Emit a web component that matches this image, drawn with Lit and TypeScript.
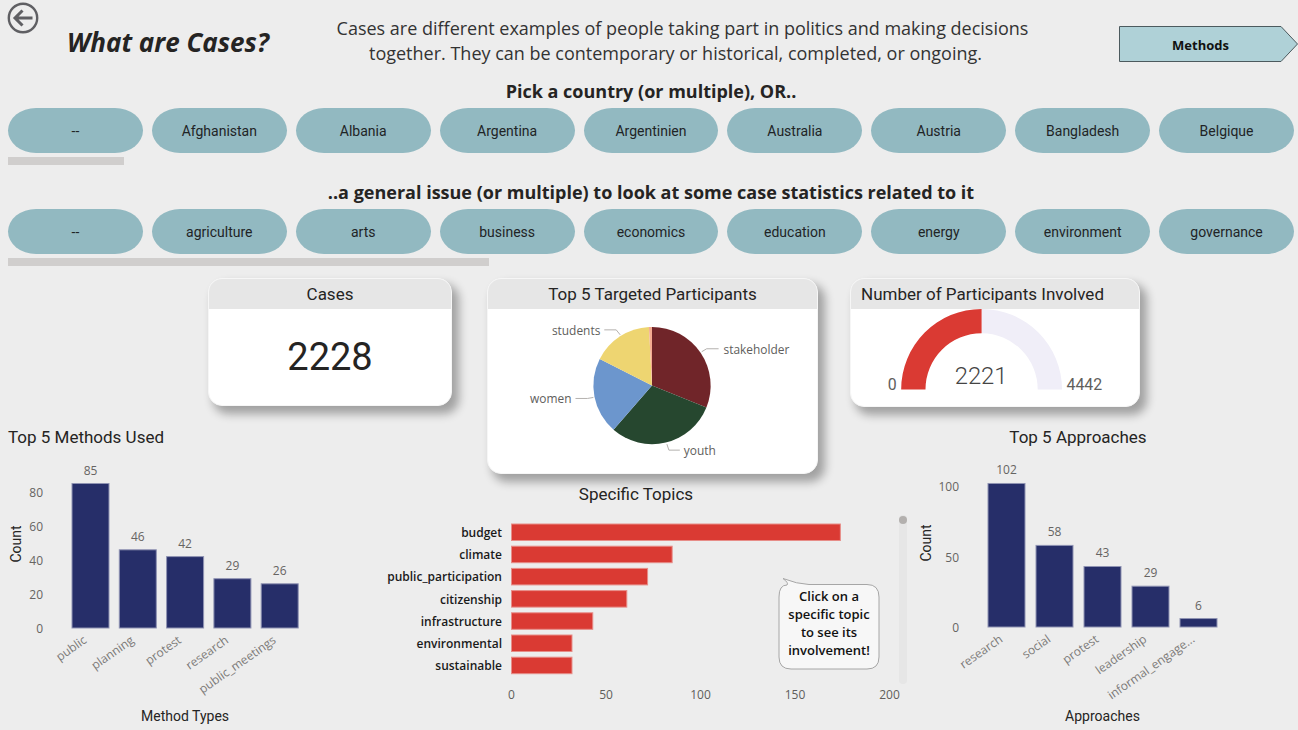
import { LitElement, html, svg, css } from "lit";
import { customElement, property, state } from "lit/decorators.js";
import { classMap } from "lit/directives/class-map.js";

interface Datum {
  label: string;
  value: number;
}

const COUNTRIES = ["--", "Afghanistan", "Albania", "Argentina", "Argentinien", "Australia", "Austria", "Bangladesh", "Belgique"];
const ISSUES = ["--", "agriculture", "arts", "business", "economics", "education", "energy", "environment", "governance"];

const METHODS: Datum[] = [
  { label: "public", value: 85 },
  { label: "planning", value: 46 },
  { label: "protest", value: 42 },
  { label: "research", value: 29 },
  { label: "public_meetings", value: 26 },
];

const APPROACHES: Datum[] = [
  { label: "research", value: 102 },
  { label: "social", value: 58 },
  { label: "protest", value: 43 },
  { label: "leadership", value: 29 },
  { label: "informal_engage...", value: 6 },
];

const TOPICS: Datum[] = [
  { label: "budget", value: 174 },
  { label: "climate", value: 85 },
  { label: "public_participation", value: 72 },
  { label: "citizenship", value: 61 },
  { label: "infrastructure", value: 43 },
  { label: "environmental", value: 32 },
  { label: "sustainable", value: 32 },
];

/** Horizontal slicer: a heading, a row of pills and a scroll track. */
@customElement("pill-slicer")
class PillSlicer extends LitElement {
  static styles = css`
    :host { display: block; }
    .heading {
      margin: 0 0 5px;
      padding-left: 4px;
      text-align: center;
      font: 700 18px/24px "Open Sans", "Noto Sans", sans-serif;
      color: #252423;
    }
    .pills {
      display: grid;
      grid-auto-flow: column;
      grid-auto-columns: minmax(0, 1fr);
      gap: 9px;
      padding: 0 4px 0 8px;
    }
    .pill {
      height: 45px;
      border: 0;
      padding: 0;
      border-radius: 28px / 50%;
      background: #92b9c1;
      color: #1f2426;
      font: 400 14px/20px Roboto, sans-serif;
      cursor: pointer;
    }
    .pill.on { background: #6f9fa9; }
    .track { padding: 4px 4px 0 8px; }
    .thumb { height: 8px; background: #d0cecd; }
  `;
  @property() heading = "";
  @property({ attribute: false }) items: string[] = [];
  @property({ type: Number }) visible = 100;
  @state() private picked = new Set<string>();

  private toggle(item: string) {
    const next = new Set(this.picked);
    next.has(item) ? next.delete(item) : next.add(item);
    this.picked = next;
  }

  render() {
    return html`
      <h2 class="heading">${this.heading}</h2>
      <div class="pills">
        ${this.items.map(
          (item) => html`<button
            type="button"
            class=${classMap({ pill: true, on: this.picked.has(item) })}
            aria-pressed=${this.picked.has(item) ? "true" : "false"}
            @click=${() => this.toggle(item)}
          >${item}</button>`
        )}
      </div>
      <div class="track"><div class="thumb" style="width:${this.visible}%"></div></div>
    `;
  }
}

/** Vertical bars with value labels and slanted category names. */
@customElement("column-chart")
class ColumnChart extends LitElement {
  static styles = css`
    :host { display: block; }
    .plot { display: block; width: 100%; }
    .bar { fill: #262e69; stroke: #8f93b3; stroke-width: 1; }
    .small { font: 400 12px "Open Sans", "Noto Sans", sans-serif; fill: #666462; }
    .name { font: 400 12px "Open Sans", "Noto Sans", sans-serif; fill: #7c7a78; }
    .axis { font: 400 14px Roboto, sans-serif; fill: #252423; }
    .mid { text-anchor: middle; }
    .end { text-anchor: end; }
  `;
  @property({ attribute: false }) data: Datum[] = [];
  @property({ attribute: false }) ticks: number[] = [];
  @property({ type: Number }) width = 377;
  @property({ type: Number }) start = 72;
  @property({ type: Number }) base = 181;
  @property({ type: Number }) unit = 1.7;
  @property({ type: Number }) step = 47.3;
  @property({ type: Number }) tickx = 43;
  @property() caption = "";

  render() {
    const { start, base, unit, step } = this;
    const w = 37;
    const centre = start + step * 2 + w / 2;
    return html`<svg class="plot" viewBox="0 0 ${this.width} 283" role="img" aria-label=${this.caption}>
      <text class="axis mid" transform="translate(21 ${base - 84}) rotate(-90)">Count</text>
      ${this.ticks.map((t) => svg`<text class="small end" x=${this.tickx} y=${base - t * unit + 5}>${t}</text>`)}
      ${this.data.map((d, i) => {
        const x = start + i * step;
        const h = d.value * unit;
        const cx = x + w / 2;
        return svg`
          <rect class="bar" x=${x} y=${base - h} width=${w} height=${h}></rect>
          <text class="small mid" x=${cx} y=${base - h - 9}>${d.value}</text>
          <text class="name end" transform="translate(${cx - 3} ${base + 14}) rotate(-35)">${d.label}</text>`;
      })}
      <text class="axis mid" x=${centre} y="274">${this.caption}</text>
    </svg>`;
  }
}

@customElement("app-root")
class AppRoot extends LitElement {
  static styles = css`
    :host {
      display: block;
      box-sizing: border-box;
      min-height: 100vh;
      background: #ededed;
      color: #252423;
      font-family: "Open Sans", "Noto Sans", sans-serif;
    }
    .header {
      display: grid;
      grid-template-columns: 294fr 757fr 68fr 179fr;
      height: 79px;
    }
    .lead { display: flex; align-items: flex-start; gap: 28px; padding: 2px 0 0 7px; }
    .back { flex: none; width: 32px; height: 32px; padding: 0; border: 0; background: none; cursor: pointer; }
    .back svg { display: block; }
    .title { margin: 22px 0 0; font: italic 700 26px/36px "Open Sans", "Noto Sans", sans-serif; white-space: nowrap; }
    .intro { margin: 16px 0 0; padding-left: 20px; text-align: center; font-size: 18px; line-height: 25px; color: #333; }
    .methods {
      grid-column: 4;
      display: grid;
      align-items: center;
      margin-top: 25px;
      height: 38px;
      padding: 0;
      border: 0;
      background: none;
      font: 700 13px/20px "Open Sans", "Noto Sans", sans-serif;
      color: #111;
      cursor: pointer;
    }
    .methods > * { grid-area: 1 / 1; }
    .methods svg { display: block; width: 100%; }
    .methods .word { padding: 2px 16px 0 0; }

    .slicers { display: grid; gap: 15px; }

    .board {
      display: grid;
      margin-top: 12px;
      grid-template-columns: 208fr 169fr 75fr 35fr 331fr 32fr 60fr 230fr 158fr;
      grid-template-rows: 149px 57px auto;
      align-items: start;
    }
    .cases { grid-area: 1 / 2 / 2 / 4; }
    .targets { grid-area: 1 / 5 / 3 / 6; }
    .gauge { grid-area: 1 / 7 / 2 / 9; }
    .used { grid-area: 2 / 1 / 4 / 3; }
    .topics { grid-area: 3 / 3 / 4 / 8; position: relative; }
    .approaches { grid-area: 2 / 8 / 4 / 10; }

    .card {
      box-sizing: border-box;
      border: 1px solid #f6f6f6;
      border-radius: 14px;
      background: #fff;
      overflow: hidden;
      box-shadow: 6px 7px 10px 1px rgba(0, 0, 0, 0.32);
    }
    .card-title, .chart-title { margin: 0; font: 400 17px/20px Roboto, sans-serif; text-align: center; }
    .card-title { padding: 5px 0; background: #e6e6e6; }
    .gauge .card-title { padding-left: 10px; text-align: left; }
    .used .chart-title { padding-left: 8px; text-align: left; }
    .approaches .chart-title { padding-right: 52px; }
    .topics .chart-title { padding-right: 15px; }
    .total { margin: 0; font: 400 38px/96px Roboto, sans-serif; text-align: center; }
    .plot { display: block; width: 100%; }
    .pie-label { font: 400 12px "Open Sans", "Noto Sans", sans-serif; fill: #605e5c; }
    .lead-line { fill: none; stroke: #b3b0ad; stroke-width: 1; }
    .limit { font: 400 16px Roboto, sans-serif; fill: #605e5c; }
    .reading { font: 300 24px Roboto, sans-serif; fill: #444; }
    .tick { font: 400 12px "Open Sans", "Noto Sans", sans-serif; fill: #605e5c; }
    .topic { font: 600 12px "Open Sans", "Noto Sans", sans-serif; fill: #1a1a1a; }
    .topic-bar { fill: #da3a33; stroke: #e78d88; stroke-width: 1; }
    .mid { text-anchor: middle; }
    .end { text-anchor: end; }
    .callout {
      position: absolute;
      right: 29px;
      top: 93px;
      width: 104px;
      height: 94px;
    }
    .callout svg { position: absolute; inset: 0; }
    .callout-text {
      position: relative;
      margin: 0;
      padding-top: 10px;
      text-align: center;
      font: 600 13px/18px "Open Sans", "Noto Sans", sans-serif;
      color: #111;
    }
  `;

  private slice(from: number, to: number, fill: string) {
    const p = (deg: number) => {
      const a = (deg * Math.PI) / 180;
      return `${165 + 59 * Math.sin(a)} ${77 - 59 * Math.cos(a)}`;
    };
    return svg`<path fill=${fill} d="M165 77 L${p(from)} A59 59 0 0 1 ${p(to)} Z"></path>`;
  }

  private pie() {
    return html`<svg class="plot" viewBox="0 0 331 165" role="img" aria-label="Top 5 Targeted Participants">
      ${this.slice(0, 112, "#702529")}
      ${this.slice(112, 221, "#26472f")}
      ${this.slice(221, 297, "#6c96cd")}
      ${this.slice(297, 357, "#eed571")}
      ${this.slice(357, 360, "#f4ab91")}
      <path class="lead-line" d="M215 43 L220 40 H232"></path>
      <path class="lead-line" d="M180 136 L182 142 H193"></path>
      <path class="lead-line" d="M106 89 L100 90 H88"></path>
      <path class="lead-line" d="M133 26 L129 21 H117"></path>
      <text class="pie-label" x="237" y="45">stakeholder</text>
      <text class="pie-label" x="197" y="147">youth</text>
      <text class="pie-label end" x="84" y="95">women</text>
      <text class="pie-label end" x="113" y="26">students</text>
    </svg>`;
  }

  private dial() {
    return html`<svg class="plot" viewBox="0 0 290 98" role="img" aria-label="Number of Participants Involved">
      <path fill="#f0eef8" d="M131.5 0 A81 81 0 0 1 212.5 81 H188 A56.5 56.5 0 0 0 131.5 24.5 Z"></path>
      <path fill="#da3a33" d="M131.5 0 A81 81 0 0 0 50.5 81 H75 A56.5 56.5 0 0 1 131.5 24.5 Z"></path>
      <text class="limit end" x="46" y="82">0</text>
      <text class="limit" x="217" y="82">4442</text>
      <text class="reading mid" x="131" y="76">2221</text>
    </svg>`;
  }

  private topicBars() {
    const unit = 1.89;
    return html`<svg class="plot" viewBox="0 0 533 226" role="img" aria-label="Specific Topics">
      ${TOPICS.map((d, i) => {
        const y = 20 + i * 22.2;
        return svg`
          <text class="topic end" x="125" y=${y + 13}>${d.label}</text>
          <rect class="topic-bar" x="134.5" y=${y} width=${d.value * unit} height="16.5"></rect>`;
      })}
      ${[0, 50, 100, 150, 200].map((t) => svg`<text class="tick mid" x=${134.5 + t * unit} y="195">${t}</text>`)}
      <rect x="522" y="11" width="8" height="169" rx="4" fill="#e6e6e6"></rect>
      <circle cx="526" cy="16" r="4" fill="#b3b0ae"></circle>
    </svg>`;
  }

  render() {
    return html`
      <header class="header">
        <div class="lead">
          <button class="back" type="button" aria-label="Back">
            <svg viewBox="0 0 32 32" width="32" height="32" fill="none" stroke="#5f5f63">
              <circle cx="16" cy="16" r="14.2" stroke-width="2.4"></circle>
              <path d="M25.5 16 H8 M15.5 8.5 L8 16 L15.5 23.5" stroke-width="3"></path>
            </svg>
          </button>
          <h1 class="title">What are Cases?</h1>
        </div>
        <p class="intro">
          Cases are different examples of people taking part in politics and making decisions<br />
          together. They can be contemporary or historical, completed, or ongoing.&nbsp;&nbsp;&nbsp;
        </p>
        <button class="methods" type="button">
          <svg viewBox="0 0 179 38" aria-hidden="true">
            <path d="M0.5 1.5 H162 L178.5 19 L162 36.5 H0.5 Z" fill="#afd1d7" stroke="#4c5a5e"></path>
          </svg>
          <span class="word">Methods</span>
        </button>
      </header>

      <div class="slicers">
        <pill-slicer heading="Pick a country (or multiple), OR.." .items=${COUNTRIES} visible="9"></pill-slicer>
        <pill-slicer
          heading="..a general issue (or multiple) to look at some case statistics related to it"
          .items=${ISSUES}
          visible="37.4"
        ></pill-slicer>
      </div>

      <main class="board">
        <section class="card cases">
          <h2 class="card-title">Cases</h2>
          <p class="total">2228</p>
        </section>
        <section class="card targets">
          <h2 class="card-title">Top 5 Targeted Participants</h2>
          ${this.pie()}
        </section>
        <section class="card gauge">
          <h2 class="card-title">Number of Participants Involved</h2>
          ${this.dial()}
        </section>
        <section class="used">
          <h2 class="chart-title">Top 5 Methods Used</h2>
          <column-chart .data=${METHODS} .ticks=${[0, 20, 40, 60, 80]} caption="Method Types"></column-chart>
        </section>
        <section class="topics">
          <h2 class="chart-title">Specific Topics</h2>
          ${this.topicBars()}
          <div class="callout">
            <svg viewBox="0 0 104 94" width="104" height="94" aria-hidden="true">
              <path
                d="M2 20 Q2 8 10 8 Q12 6 6 1.5 Q20 7 32 7.5 H90 Q102 7.5 102 20 V80 Q102 92 90 92 H14 Q2 92 2 80 Z"
                fill="#f7f7f7" stroke="#a6a6a6"></path>
            </svg>
            <p class="callout-text">Click on a<br />specific topic<br />to see its<br />involvement!</p>
          </div>
        </section>
        <section class="approaches">
          <h2 class="chart-title">Top 5 Approaches</h2>
          <column-chart
            .data=${APPROACHES} .ticks=${[0, 50, 100]} caption="Approaches"
            width="388" start="78" base="180" unit="1.407" step="48" tickx="49"
          ></column-chart>
        </section>
      </main>
    `;
  }
}
